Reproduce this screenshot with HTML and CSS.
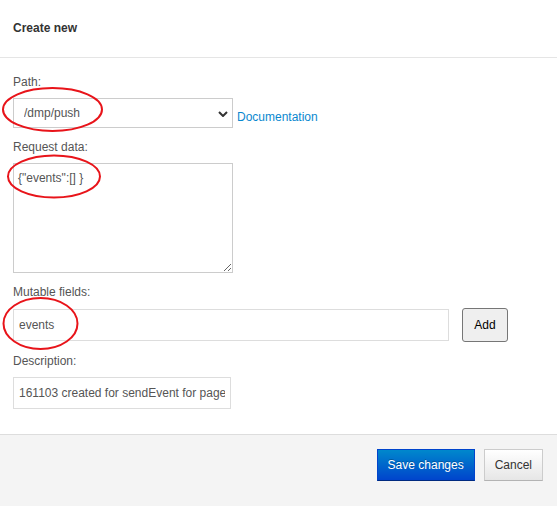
FILE: index.html
```html
<!DOCTYPE html>
<html lang="en">
    <head>
        <meta charset="UTF-8">
        <title>Create new</title>
        <link rel="stylesheet" href="styles.css">
    </head>
    <body>
        <div class="modal">
            <div class="modal-header">
                <h3>Create new</h3>
            </div>
            <form class="modal-body">
                <div class="field">
                    <label for="path">Path:</label>
                    <div class="path-row">
                        <div class="select-wrap">
                            <select id="path" name="path">
                                <option>/dmp/push</option>
                            </select>
                            <svg class="chevron" width="10" height="6" viewBox="0 0 10 6">
                                <path d="M1 1 L5 5 L9 1" fill="none" stroke="#333" stroke-width="2"/>
                            </svg>
                        </div>
                        <a class="doc-link" href="#">Documentation</a>
                    </div>
                </div>
                <div class="field">
                    <label for="request">Request data:</label>
                    <textarea id="request" name="request">{"events":[] }</textarea>
                </div>
                <div class="field">
                    <label for="mutable">Mutable fields:</label>
                    <div class="mutable-row">
                        <input type="text" id="mutable" class="wide" value="events">
                        <button type="button" class="add-btn">Add</button>
                    </div>
                </div>
                <div class="field">
                    <label for="description">Description:</label>
                    <input type="text" id="description" class="narrow" value="161103 created for sendEvent for page">
                </div>
            </form>
            <div class="modal-footer">
                <button type="button" class="btn btn-primary">Save changes</button>
                <button type="button" class="btn">Cancel</button>
            </div>
        </div>
        <!-- red annotation marks drawn over the form -->
        <svg class="marks" width="557" height="506" viewBox="0 0 557 506">
            <ellipse cx="52.5" cy="109.5" rx="49.5" ry="21.5" />
            <ellipse cx="54" cy="176.5" rx="46" ry="21" />
            <ellipse cx="40.5" cy="323.5" rx="37" ry="25.5" />
        </svg>
    </body>
</html>
```

FILE: styles.css
```css
body { margin: 0; font-family: "Liberation Sans", Arial, sans-serif; font-size: 12px; line-height: 16px; color: #555; background: #fff; }
.modal { position: relative; }
.modal-header { padding: 20px 13px 21px; border-bottom: 1px solid #e5e5e5; }
.modal-header h3 { margin: 0; font-size: 12px; line-height: 16px; font-weight: bold; color: #333; }
.modal-body { display: flex; flex-direction: column; gap: 11px; padding: 16px 13px 25px; }
.field { display: flex; flex-direction: column; gap: 8px; }
.field label { display: block; color: #555; }
.path-row { display: flex; align-items: flex-end; gap: 4px; }
.select-wrap { position: relative; width: 220px; height: 30px; }
.select-wrap select { appearance: none; -webkit-appearance: none; width: 100%; height: 30px; box-sizing: border-box; margin: 0; padding: 0 10px; border: 1px solid #ccc; border-radius: 0; background: #fff; font: inherit; color: #555; outline: none; }
.chevron { position: absolute; right: 5px; top: 13px; pointer-events: none; }
.doc-link { color: #0a88cf; text-decoration: none; padding-bottom: 3px; }
textarea { width: 220px; height: 110px; box-sizing: border-box; margin: 0; padding: 6px 4px; border: 1px solid #ccc; font: inherit; color: #555; resize: vertical; display: block; }
input[type="text"] { height: 32px; box-sizing: border-box; margin: 0; padding: 0 5px; border: 1px solid #ddd; font: inherit; color: #555; }
.mutable-row { display: flex; align-items: center; gap: 13px; }
.wide { width: 436px; }
.narrow { width: 218px; }
.add-btn { width: 46px; height: 34px; padding: 0; border: 1px solid #767676; border-radius: 3px; background: #efefef; font: inherit; color: #000; }
.modal-footer { display: flex; justify-content: flex-end; gap: 9px; padding: 14px 14px 25px; border-top: 1px solid #ddd; background: #f4f4f4; }
.btn { height: 32px; padding: 0 10px; font: inherit; color: #333; white-space: nowrap; border: 1px solid #ccc; border-bottom-color: #b3b3b3; border-radius: 0; background: linear-gradient(to bottom, #fff, #e6e6e6); }
.btn-primary { width: 98px; padding: 0; color: #fff; border-color: #0044cc #0044cc #002a80; background: linear-gradient(to bottom, #0088cc, #0044cc); text-shadow: 0 -1px 0 rgba(0, 0, 0, 0.25); }
.marks { position: absolute; top: 0; left: 0; pointer-events: none; }
.marks ellipse { fill: none; stroke: #e8141a; stroke-width: 2; }
```
